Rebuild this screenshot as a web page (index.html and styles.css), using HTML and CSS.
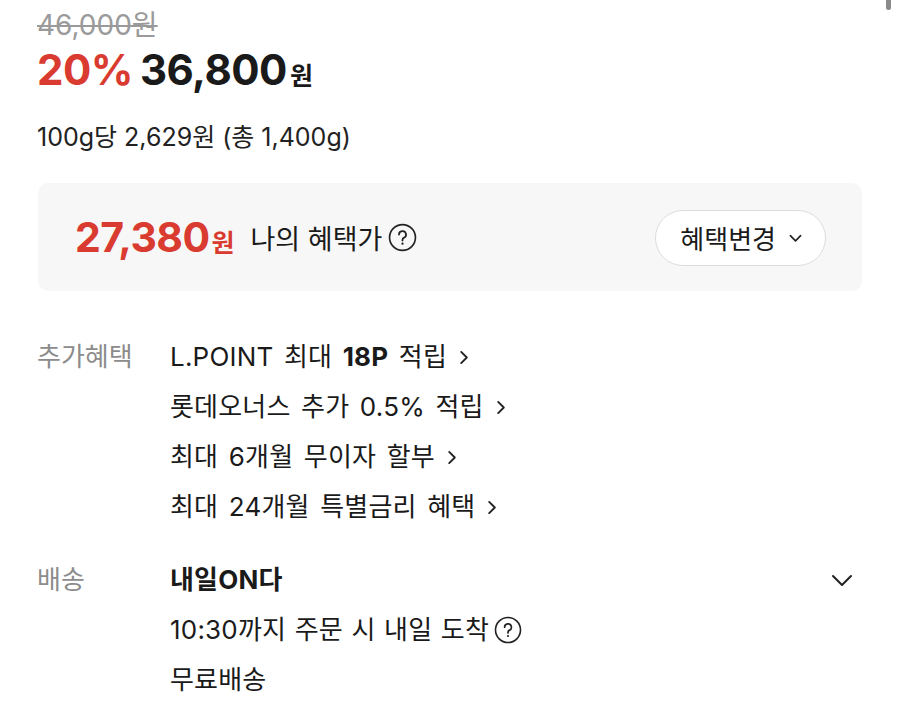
FILE: index.html
```html
<!DOCTYPE html>
<html lang="ko">
<head>
<meta charset="utf-8">
<link rel="stylesheet" href="styles.css">
</head>
<body>
<div class="scrollbar"></div>
<div class="page">
  <div class="price-orig">46,000원</div>
  <div class="price-main"><span class="rate">20%</span><span class="amount">36,800</span><span class="won">원</span></div>
  <div class="unit">100g당 2,629원 (총 1,400g)</div>

  <div class="benefit-box">
    <div class="benefit-left">
      <span class="my-price">27,380<span class="my-won">원</span></span>
      <span class="my-label">나의 혜택가</span>
      <svg class="qicon" viewBox="0 0 28 28" width="29" height="29"><circle cx="14" cy="14" r="12.5" fill="none" stroke="#222" stroke-width="1.6"/><path d="M10.6 11.2a3.4 3.4 0 1 1 4.6 3.2c-.9.4-1.2 1-1.2 1.9v.7" fill="none" stroke="#222" stroke-width="1.7" stroke-linecap="round"/><circle cx="14" cy="20" r="1.1" fill="#222"/></svg>
    </div>
    <button class="change-btn">혜택변경<svg class="btn-chev" viewBox="0 0 14 9" width="13" height="9"><path d="M1.5 1.5 7 7l5.5-5.5" fill="none" stroke="#222" stroke-width="1.8" stroke-linecap="round" stroke-linejoin="round"/></svg></button>
  </div>

  <div class="info-row extra">
    <div class="label">추가혜택</div>
    <div class="content">
      <div class="line">L.POINT 최대 <b>18P</b> 적립<svg class="chev" viewBox="0 0 10 16" width="10" height="15"><path d="M2 2l6 6-6 6" fill="none" stroke="#222" stroke-width="2" stroke-linecap="round" stroke-linejoin="round"/></svg></div>
      <div class="line">롯데오너스 추가 0.5% 적립<svg class="chev" viewBox="0 0 10 16" width="10" height="15"><path d="M2 2l6 6-6 6" fill="none" stroke="#222" stroke-width="2" stroke-linecap="round" stroke-linejoin="round"/></svg></div>
      <div class="line">최대 6개월 무이자 할부<svg class="chev" viewBox="0 0 10 16" width="10" height="15"><path d="M2 2l6 6-6 6" fill="none" stroke="#222" stroke-width="2" stroke-linecap="round" stroke-linejoin="round"/></svg></div>
      <div class="line">최대 24개월 특별금리 혜택<svg class="chev" viewBox="0 0 10 16" width="10" height="15"><path d="M2 2l6 6-6 6" fill="none" stroke="#222" stroke-width="2" stroke-linecap="round" stroke-linejoin="round"/></svg></div>
    </div>
  </div>

  <div class="info-row delivery">
    <div class="label">배송</div>
    <div class="content">
      <div class="line head"><b>내일ON다</b><svg class="down" viewBox="0 0 22 13" width="22" height="13"><path d="M2 2l9 9 9-9" fill="none" stroke="#222" stroke-width="2" stroke-linecap="round" stroke-linejoin="round"/></svg></div>
      <div class="line">10:30까지 주문 시 내일 도착<svg class="qicon small" viewBox="0 0 28 28" width="28" height="28"><circle cx="14" cy="14" r="12.5" fill="none" stroke="#222" stroke-width="1.6"/><path d="M10.6 11.2a3.4 3.4 0 1 1 4.6 3.2c-.9.4-1.2 1-1.2 1.9v.7" fill="none" stroke="#222" stroke-width="1.7" stroke-linecap="round"/><circle cx="14" cy="20" r="1.1" fill="#222"/></svg></div>
      <div class="line">무료배송</div>
    </div>
  </div>
</div>
</body>
</html>
```

FILE: styles.css
```css
html, body {
  margin: 0;
  padding: 0;
  background: #fff;
}
body {
  font-family: Inter, "Noto Sans CJK KR", sans-serif;
  color: #1a1a1a;
  width: 900px;
  height: 713px;
  overflow: hidden;
}
.scrollbar {
  position: absolute;
  top: -4px;
  left: 886px;
  width: 5px;
  height: 14px;
  border-radius: 3px;
  background: #8a8a8a;
}
.page {
  padding: 0 38px 0 37px;
}
.price-orig {
  margin-top: 9px;
  font-size: 28px;
  line-height: 32px;
  color: #9a9a9a;
  text-decoration: line-through;
  text-decoration-thickness: 2px;
}
.price-main {
  margin-top: 4px;
  line-height: 50px;
  font-weight: 700;
  display: flex;
  align-items: baseline;
}
.rate {
  color: #d93b30;
  font-size: 42px;
  letter-spacing: -0.5px;
}
.amount {
  font-size: 42px;
  margin-left: 7px;
  letter-spacing: -0.5px;
}
.won {
  font-size: 25px;
  margin-left: 3px;
}
.unit {
  margin-top: 21px;
  font-size: 25px;
  line-height: 30px;
  color: #222;
}
.benefit-box {
  margin-top: 31px;
  margin-left: 1px;
  height: 108px;
  background: #f7f7f7;
  border-radius: 10px;
  display: flex;
  align-items: center;
  justify-content: space-between;
  padding: 0 36px 0 37px;
  box-sizing: border-box;
}
.benefit-left {
  display: flex;
  align-items: center;
}
.my-price {
  color: #d93b30;
  font-weight: 700;
  font-size: 41px;
  letter-spacing: -0.6px;
}
.my-won {
  font-size: 25px;
  margin-left: 2px;
  letter-spacing: 0;
}
.my-label {
  font-size: 27px;
  margin-left: 16px;
  color: #1a1a1a;
}
.qicon {
  margin-left: 6px;
  display: block;
}
.change-btn {
  font-family: inherit;
  font-size: 26px;
  color: #1a1a1a;
  background: #fff;
  border: 1.5px solid #dcdcdc;
  border-radius: 28px;
  height: 56px;
  padding: 0 23px 0 24px;
  display: flex;
  align-items: center;
  gap: 13px;
  margin-top: 1px;
}
.btn-chev {
  display: block;
  margin-top: 2px;
}
.info-row {
  display: grid;
  grid-template-columns: 133px 1fr;
}
.extra {
  margin-top: 41px;
}
.delivery {
  margin-top: 23px;
}
.label {
  font-size: 26px;
  line-height: 50px;
  color: #8c8c8c;
}
.line {
  font-size: 26px;
  line-height: 50px;
  color: #1a1a1a;
  display: flex;
  align-items: center;
  white-space: pre;
  word-spacing: 3px;
  letter-spacing: 0.2px;
}
.delivery .line {
  word-spacing: 1px;
}
.line b {
  font-weight: 700;
}
.chev {
  display: block;
  margin-left: 12px;
}
.head {
  justify-content: space-between;
  padding-right: 9px;
}
.down {
  display: block;
}
.qicon.small {
  margin-left: 5px;
}
```
